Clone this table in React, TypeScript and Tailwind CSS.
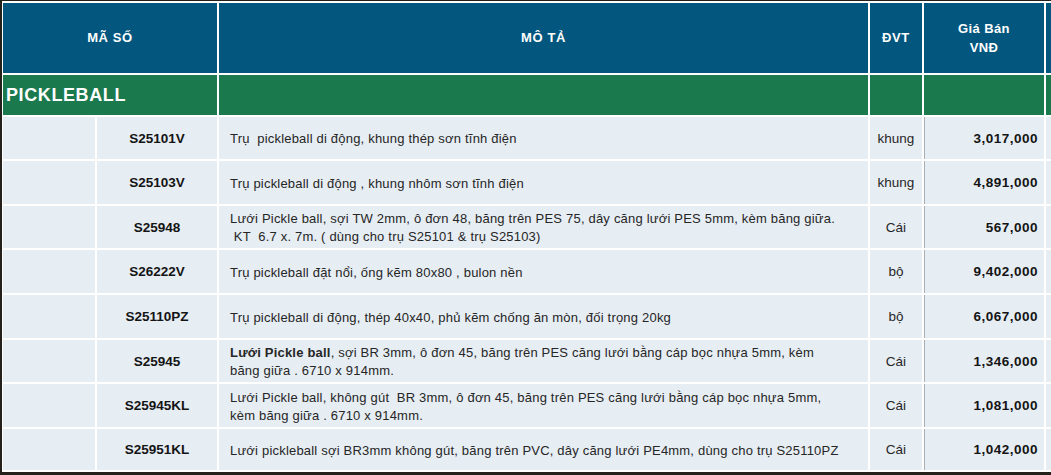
import React from 'react'

type Row = {
  code: string
  desc: React.ReactNode
  unit: string
  price: string
}

const rows: Row[] = [
  { code: 'S25101V', desc: 'Trụ  pickleball di động, khung thép sơn tĩnh điện', unit: 'khung', price: '3,017,000' },
  { code: 'S25103V', desc: 'Trụ pickleball di động , khung nhôm sơn tĩnh điện', unit: 'khung', price: '4,891,000' },
  {
    code: 'S25948',
    desc: (
      <>
        Lưới Pickle ball, sợi TW 2mm, ô đơn 48, băng trên PES 75, dây căng lưới PES 5mm, kèm băng giữa.
        <br />
        {' KT  6.7 x. 7m. ( dùng cho trụ S25101 & trụ S25103)'}
      </>
    ),
    unit: 'Cái',
    price: '567,000',
  },
  { code: 'S26222V', desc: 'Trụ pickleball đặt nổi, ống kẽm 80x80 , bulon nền', unit: 'bộ', price: '9,402,000' },
  { code: 'S25110PZ', desc: 'Trụ pickleball di động, thép 40x40, phủ kẽm chống ăn mòn, đối trọng 20kg', unit: 'bộ', price: '6,067,000' },
  {
    code: 'S25945',
    desc: (
      <>
        <b>Lưới Pickle ball</b>, sợi BR 3mm, ô đơn 45, băng trên PES căng lưới bằng cáp bọc nhựa 5mm, kèm
        <br />
        băng giữa . 6710 x 914mm.
      </>
    ),
    unit: 'Cái',
    price: '1,346,000',
  },
  {
    code: 'S25945KL',
    desc: (
      <>
        {'Lưới Pickle ball, không gút  BR 3mm, ô đơn 45, băng trên PES căng lưới bằng cáp bọc nhựa 5mm,'}
        <br />
        kèm băng giữa . 6710 x 914mm.
      </>
    ),
    unit: 'Cái',
    price: '1,081,000',
  },
  { code: 'S25951KL', desc: 'Lưới pickleball sợi BR3mm không gút, băng trên PVC, dây căng lưới PE4mm, dùng cho trụ S25110PZ', unit: 'Cái', price: '1,042,000' },
]

export default function App() {
  return (
    <div
      className="h-[475px] w-[1051px] overflow-hidden bg-[#23211a] pl-[2px] pt-[1px]"
      style={{ fontFamily: '"Liberation Sans", Arial, sans-serif' }}
    >
      <div className="grid grid-cols-[92px_120px_649px_52px_120px_1fr] grid-rows-[70px_40px_42px_43px_42px_43px_43px_42px_43px_41px] gap-[2px] bg-white pb-[2px] pl-[1px] pt-[2px]">
        {/* header */}
        <div className="col-span-2 flex items-center justify-center bg-[#03567e] text-[13px] font-bold tracking-[0.6px] text-white">
          MÃ SỐ
        </div>
        <div className="flex items-center justify-center bg-[#03567e] text-[13px] font-bold tracking-[0.6px] text-white">
          MÔ TẢ
        </div>
        <div className="flex items-center justify-center bg-[#03567e] text-[13px] font-bold tracking-[0.6px] text-white">
          ĐVT
        </div>
        <div className="flex flex-col items-center justify-center bg-[#03567e] text-[13px] font-bold leading-[19px] tracking-[0.4px] text-white">
          <span>Giá Bán</span>
          <span>VNĐ</span>
        </div>
        <div className="bg-[#03567e]" />

        {/* section */}
        <div className="col-span-2 flex items-center bg-[#1a7a4e] pl-[3px] pt-[1px] text-[18px] font-bold tracking-[0.6px] text-white">
          PICKLEBALL
        </div>
        <div className="bg-[#1a7a4e]" />
        <div className="bg-[#1a7a4e]" />
        <div className="bg-[#1a7a4e]" />
        <div className="bg-[#1a7a4e]" />

        {rows.map((r) => (
          <React.Fragment key={r.code}>
            <div className="bg-[#e6edf3]" />
            <div className="flex items-center justify-center bg-[#e6edf3] pt-[2px] text-[13.5px] font-bold text-[#141414]">
              {r.code}
            </div>
            <div className="flex items-center whitespace-pre bg-[#e6edf3] pl-[11px] pt-[2px] text-[13px] leading-[18px] tracking-[0.2px] text-[#262626]">
              <div>{r.desc}</div>
            </div>
            <div className="flex items-center justify-center bg-[#e6edf3] pt-[2px] text-[13.5px] text-[#262626]">
              {r.unit}
            </div>
            <div className="flex items-center justify-end border-l border-[#a7aeb6] bg-[#e6edf3] pr-[6px] pt-[2px] text-[13.5px] font-bold tracking-[0.5px] text-[#141414]">
              {r.price}
            </div>
            <div className="bg-[#e6edf3]" />
          </React.Fragment>
        ))}
      </div>
    </div>
  )
}
